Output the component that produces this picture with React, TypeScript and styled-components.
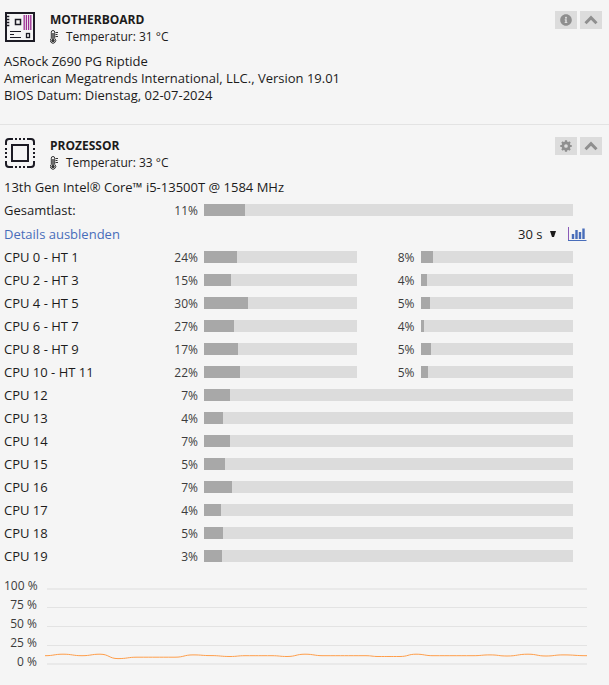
import React from "react";
import styled, { createGlobalStyle } from "styled-components";
import { FaInfoCircle } from "react-icons/fa";

const GlobalStyle = createGlobalStyle`
  * { box-sizing: border-box; }
  body {
    margin: 0;
    background: #f5f5f5;
    color: #1c1b1b;
    font-family: "Open Sans", "Noto Sans", sans-serif;
    font-size: 13px;
    line-height: 17px;
  }
`;

const Panel = styled.section`
  padding: 11px 7px 20px 4px;
  border-bottom: 1px solid #e3e3e3;
  &:last-child {
    padding-top: 12px;
    padding-bottom: 0;
    border-bottom: 0;
  }
`;

const Header = styled.header`
  display: flex;
  align-items: flex-start;
  margin-bottom: 8px;
`;

const Emblem = styled.svg`
  flex: none;
  width: 30px;
  height: 30px;
  margin: 1px 15px 0 1px;
`;

const Heading = styled.div`
  flex: 1;
`;

const Title = styled.h2`
  margin: 0;
  font-size: 12px;
  font-weight: 700;
  line-height: 17px;
  text-transform: uppercase;
`;

const Temperature = styled.div`
  display: flex;
  align-items: center;
  gap: 8px;
  font-size: 12px;
`;

const Actions = styled.div`
  display: flex;
  gap: 3px;
`;

const ActionButton = styled.button`
  display: flex;
  align-items: center;
  justify-content: center;
  width: 22px;
  height: 18px;
  padding: 0;
  border: 0;
  background: #dcdcdc;
  color: #8f8f8f;
  cursor: pointer;
`;

const Line = styled.p`
  margin: 0;
`;

const Rows = styled.div`
  margin-top: 3px;
  padding-right: 29px;
`;

const Row = styled.div`
  display: flex;
  align-items: center;
  height: 23px;
`;

const Label = styled.span`
  width: 150px;
`;

const Percent = styled.span<{ $width: number }>`
  flex: none;
  width: ${(p) => p.$width}px;
  padding-right: 6px;
  color: #3c3c3c;
  font-size: 12px;
  text-align: right;
`;

const Track = styled.div`
  flex: 1;
  height: 12px;
  margin-bottom: 1px;
  background: #dcdcdc;
`;

const Fill = styled.div`
  height: 100%;
  background: #a8a8a8;
`;

const DetailsRow = styled.div`
  display: flex;
  align-items: center;
  justify-content: space-between;
  height: 24px;
  margin-right: -14px;
`;

const DetailsLink = styled.a`
  color: #486dba;
  text-decoration: none;
`;

const Tools = styled.div`
  display: flex;
  align-items: center;
  gap: 12px;
`;

const SelectBox = styled.div`
  display: grid;
  align-items: center;
  & > * { grid-area: 1 / 1; }
  & > svg {
    justify-self: end;
    pointer-events: none;
  }
`;

const Select = styled.select`
  appearance: none;
  width: 38px;
  padding: 0;
  border: 0;
  background: transparent;
  color: #1c1b1b;
  font: inherit;
`;

const ChartButton = styled.button`
  display: flex;
  padding: 0;
  border: 0;
  background: transparent;
  cursor: pointer;
`;

const ChartArea = styled.div`
  display: flex;
  gap: 8px;
  margin-top: 8px;
  padding-right: 15px;
`;

const Axis = styled.div`
  width: 33px;
  color: #3c3c3c;
  font-size: 12px;
  line-height: 19px;
  text-align: right;
  white-space: nowrap;
`;

const Plot = styled.svg`
  flex: 1;
  min-width: 0;
  height: 96px;
`;

const Thermometer = () => (
  <svg width="8" height="14" viewBox="0 0 8 14" fill="none" stroke="#333" strokeWidth="1" aria-hidden="true">
    <path d="M1.300 8.400V2.200a1.700 1.700 0 0 1 3.400 0v6.200a2.700 2.700 0 1 1-3.400 0z" />
    <path d="M3 3V10" strokeWidth="1.400" />
    <circle cx="3" cy="10.600" r="1.700" fill="#333" stroke="none" />
    <path d="M5.500 2.500H8M5.500 4.500H7.500M5.500 6.500H8" />
  </svg>
);

const MotherboardIcon = () => (
  <Emblem viewBox="0 0 30 30" fill="none" stroke="#1c1b24" aria-hidden="true">
    <rect x="1" y="1" width="28" height="28" strokeWidth="2" />
    <path d="M2 4.500h2.300M2 7.500h2.300M2 10.500h2.300M2 13.500h2.300" strokeWidth="1.700" />
    <rect x="10.500" y="7.500" width="5" height="5" strokeWidth="1.500" />
    <path d="M19.200 3v15M21.400 3v15M23.600 3v15M25.800 3v15" stroke="#9b2c92" strokeWidth="1.300" />
    <path d="M5 19.500h11M5 22.500h4M5 25.500h11" strokeWidth="1.200" />
    <rect x="21.500" y="21.500" width="3" height="4" strokeWidth="1.300" />
  </Emblem>
);

const ProcessorIcon = () => (
  <Emblem viewBox="0 0 30 30" fill="none" stroke="#1c1b24" strokeWidth="2" aria-hidden="true">
    <rect x="7" y="7" width="16" height="16" />
    <path d="M1 7V4a3 3 0 0 1 3-3h4M22 1h4a3 3 0 0 1 3 3v3M29 23v3a3 3 0 0 1-3 3h-4M8 29H4a3 3 0 0 1-3-3v-3" />
    <path d="M10 1h2M14 1h2M18 1h2M10 29h2M14 29h2M18 29h2M1 10v2M1 14v2M1 18v2M29 10v2M29 14v2M29 18v2" />
  </Emblem>
);

const ChevronUp = () => (
  <svg width="14" height="10" viewBox="0 0 14 10" fill="none" stroke="currentColor" strokeWidth="3" aria-hidden="true">
    <path d="M1.500 8.200L7 2.700L12.500 8.200" />
  </svg>
);

const Gear = () => (
  <svg width="12" height="12" viewBox="-6.500 -6.500 13 13" aria-hidden="true">
    <circle r="3.400" fill="none" stroke="currentColor" strokeWidth="2.800" />
    {[0, 45, 90, 135].map((a) => (
      <path key={a} d="M0 -6.200V-4M0 4V6.200" stroke="currentColor" strokeWidth="2.400" transform={`rotate(${a})`} />
    ))}
  </svg>
);

const BarsIcon = () => (
  <svg width="19" height="15" viewBox="0 0 19 15" fill="none" aria-hidden="true">
    <path d="M0.500 0V13.500" stroke="#8a5bb8" />
    <path d="M0 13.500H18.500" stroke="#486dba" />
    <path d="M5 12V7M8.500 12V3M12 12V5M15.500 12V1.500" stroke="#486dba" strokeWidth="2.400" />
  </svg>
);

type Load = { value: number; fill: number };
type Core = { name: string; loads: Load[] };

const cores: Core[] = [
  { name: "CPU 0 - HT 1", loads: [{ value: 24, fill: 21.6 }, { value: 8, fill: 8.5 }] },
  { name: "CPU 2 - HT 3", loads: [{ value: 15, fill: 17.6 }, { value: 4, fill: 4 }] },
  { name: "CPU 4 - HT 5", loads: [{ value: 30, fill: 28.8 }, { value: 5, fill: 6 }] },
  { name: "CPU 6 - HT 7", loads: [{ value: 27, fill: 19.6 }, { value: 4, fill: 2.6 }] },
  { name: "CPU 8 - HT 9", loads: [{ value: 17, fill: 22.2 }, { value: 5, fill: 7.2 }] },
  { name: "CPU 10 - HT 11", loads: [{ value: 22, fill: 23.5 }, { value: 5, fill: 4.6 }] },
  { name: "CPU 12", loads: [{ value: 7, fill: 7.1 }] },
  { name: "CPU 13", loads: [{ value: 4, fill: 5.2 }] },
  { name: "CPU 14", loads: [{ value: 7, fill: 7.1 }] },
  { name: "CPU 15", loads: [{ value: 5, fill: 5.7 }] },
  { name: "CPU 16", loads: [{ value: 7, fill: 7.6 }] },
  { name: "CPU 17", loads: [{ value: 4, fill: 4.6 }] },
  { name: "CPU 18", loads: [{ value: 5, fill: 5.2 }] },
  { name: "CPU 19", loads: [{ value: 3, fill: 4.9 }] },
];

const samples: [number, number][] = [
  [0, 79.7], [18, 78.2], [37, 79.7], [55, 78.2], [73, 82.6], [92, 81.2], [130, 81.2], [148, 78.9],
  [166, 79.6], [185, 80.5], [200, 79.7], [227, 79.7], [242, 80.5], [260, 78.2], [278, 79.7], [321, 79.7],
  [333, 80.5], [355, 80.5], [371, 78.2], [388, 79.7], [428, 79.7], [445, 78.9], [462, 80], [483, 78.2],
  [501, 80], [518, 78.9], [542, 79.7],
];

const curve = samples.reduce((path, [x, y], i) => {
  if (i === 0) return `M${x} ${y}`;
  const [px, py] = samples[i - 1];
  const mid = (px + x) / 2;
  return `${path}C${mid} ${py} ${mid} ${y} ${x} ${y}`;
}, "");

const CoreRow = ({ name, loads }: Core) => (
  <Row>
    <Label>{name}</Label>
    {loads.map((load, i) => (
      <React.Fragment key={i}>
        <Percent $width={i === 0 ? 50 : 64}>{load.value}%</Percent>
        <Track>
          <Fill style={{ width: `${load.fill}%` }} />
        </Track>
      </React.Fragment>
    ))}
  </Row>
);

export default function App() {
  return (
    <main>
      <GlobalStyle />
      <Panel>
        <Header>
          <MotherboardIcon />
          <Heading>
            <Title>Motherboard</Title>
            <Temperature><Thermometer />Temperatur: 31 °C</Temperature>
          </Heading>
          <Actions>
            <ActionButton aria-label="Info"><FaInfoCircle size={12} /></ActionButton>
            <ActionButton aria-label="Motherboard einklappen"><ChevronUp /></ActionButton>
          </Actions>
        </Header>
        <Line>ASRock Z690 PG Riptide</Line>
        <Line>American Megatrends International, LLC., Version 19.01</Line>
        <Line>BIOS Datum: Dienstag, 02-07-2024</Line>
      </Panel>
      <Panel>
        <Header>
          <ProcessorIcon />
          <Heading>
            <Title>Prozessor</Title>
            <Temperature><Thermometer />Temperatur: 33 °C</Temperature>
          </Heading>
          <Actions>
            <ActionButton aria-label="Einstellungen"><Gear /></ActionButton>
            <ActionButton aria-label="Prozessor einklappen"><ChevronUp /></ActionButton>
          </Actions>
        </Header>
        <Line>13th Gen Intel® Core™ i5-13500T @ 1584 MHz</Line>
        <Rows>
          <CoreRow name="Gesamtlast:" loads={[{ value: 11, fill: 11.1 }]} />
          <DetailsRow>
            <DetailsLink href="#details">Details ausblenden</DetailsLink>
            <Tools>
              <SelectBox>
                <Select aria-label="Zeitraum" defaultValue="30">
                  <option value="30">30 s</option>
                </Select>
                <svg width="6" height="6" viewBox="0 0 6 6" aria-hidden="true">
                  <path d="M0 0H6L4 6H2Z" fill="#1c1b1b" />
                </svg>
              </SelectBox>
              <ChartButton aria-label="Diagramm umschalten"><BarsIcon /></ChartButton>
            </Tools>
          </DetailsRow>
          {cores.map((core) => <CoreRow key={core.name} {...core} />)}
        </Rows>
        <ChartArea>
          <Axis>
            {[100, 75, 50, 25, 0].map((v) => <div key={v}>{v} %</div>)}
          </Axis>
          <Plot viewBox="0 0 542 96" preserveAspectRatio="none" role="img" aria-label="CPU-Auslastung">
            <path d="M2 13H542M2 88H542" stroke="#e9e9e9" strokeWidth="2" />
            <path d="M2 31.500H542M2 50.500H542M2 69.500H542" stroke="#e3e3e3" />
            <path d={curve} fill="none" stroke="#ff9e4a" />
          </Plot>
        </ChartArea>
      </Panel>
    </main>
  );
}
